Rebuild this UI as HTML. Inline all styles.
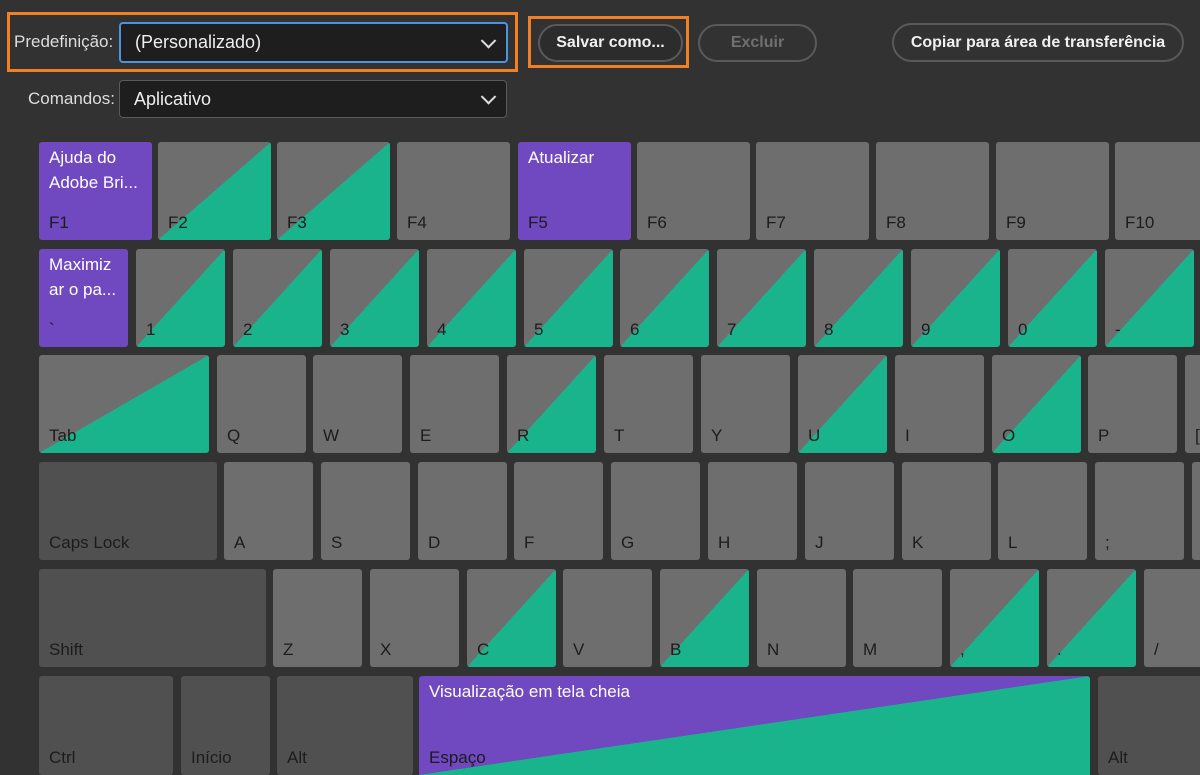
<!DOCTYPE html>
<html><head><meta charset="utf-8"><style>
html,body{margin:0;padding:0}
body{width:1200px;height:775px;background:#323232;position:relative;overflow:hidden;font-family:"Liberation Sans Narrow","Liberation Sans",sans-serif;}
.k{position:absolute;background:#6e6e6e;border-radius:3px;overflow:hidden}
.d{background:#505050}
.p{background:#7048c0}
.g{background:linear-gradient(to bottom right,#6e6e6e 50%,#1ab48c 50%)}
.sp{background:linear-gradient(to bottom right,#7048c0 50%,#1ab48c 50%)}
.k b{position:absolute;left:10px;bottom:7px;font-weight:normal;font-size:17px;color:#1c1c1c}
.k i{position:absolute;left:10px;top:3px;font-style:normal;font-size:17px;line-height:25px;color:#fff}
.r1{top:142px;height:98px}.r2{top:249px;height:98px}.r3{top:355px;height:98px}.r4{top:462px;height:98px}.r5{top:569px;height:98px}.r6{top:676px;height:99px}
.lbl{position:absolute;font-size:17px;color:#ddd}
.sel{position:absolute;background:#1e1e1e;border:1px solid #5a5a5a;border-radius:4px;box-sizing:border-box;color:#eee;font-size:18px;padding-left:14px}
.chev{position:absolute;right:12px;top:50%;width:9px;height:9px;border-right:2.5px solid #ddd;border-bottom:2.5px solid #ddd;transform:translateY(-70%) rotate(45deg)}
.btn{position:absolute;border:2px solid #5a5a5a;border-radius:20px;box-sizing:border-box;text-align:center;font-family:"Liberation Sans",sans-serif;font-weight:bold;font-size:16px;color:#f0f0f0;background:#2c2c2c}
.or{position:absolute;border:3px solid #f08024;box-sizing:border-box}
</style></head><body>
<div class="or" style="left:7px;top:12px;width:511px;height:60px"></div>
<div class="or" style="left:528px;top:16px;width:161px;height:52px"></div>
<div class="lbl" style="left:14px;top:32px">Predefinição:</div>
<div class="sel" style="left:119px;top:22px;width:389px;height:41px;border:2px solid #4b95e0;line-height:37px">(Personalizado)<span class="chev"></span></div>
<div class="btn" style="left:538px;top:24px;width:145px;height:38px;line-height:34px">Salvar como...</div>
<div class="btn" style="left:698px;top:24px;width:119px;height:38px;line-height:34px;color:#707070;background:#323232">Excluir</div>
<div class="btn" style="left:892px;top:23px;width:292px;height:39px;line-height:35px;background:#323232">Copiar para área de transferência</div>
<div class="lbl" style="left:28px;top:89px">Comandos:</div>
<div class="sel" style="left:119px;top:80px;width:388px;height:38px;line-height:36px">Aplicativo<span class="chev"></span></div>

<div class="k p r1" style="left:39px;width:113px"><i>Ajuda do<br>Adobe Bri...</i><b>F1</b></div>
<div class="k g r1" style="left:158px;width:113px"><b>F2</b></div>
<div class="k g r1" style="left:277px;width:113px"><b>F3</b></div>
<div class="k r1" style="left:397px;width:113px"><b>F4</b></div>
<div class="k p r1" style="left:518px;width:113px"><i>Atualizar</i><b>F5</b></div>
<div class="k r1" style="left:637px;width:113px"><b>F6</b></div>
<div class="k r1" style="left:756px;width:113px"><b>F7</b></div>
<div class="k r1" style="left:876px;width:113px"><b>F8</b></div>
<div class="k r1" style="left:996px;width:113px"><b>F9</b></div>
<div class="k r1" style="left:1115px;width:113px"><b>F10</b></div>

<div class="k p r2" style="left:39px;width:89px"><i>Maximiz<br>ar o pa...</i><b>`</b></div>
<div class="k g r2" style="left:136px;width:89px"><b>1</b></div>
<div class="k g r2" style="left:233px;width:89px"><b>2</b></div>
<div class="k g r2" style="left:330px;width:89px"><b>3</b></div>
<div class="k g r2" style="left:427px;width:89px"><b>4</b></div>
<div class="k g r2" style="left:524px;width:89px"><b>5</b></div>
<div class="k g r2" style="left:620px;width:89px"><b>6</b></div>
<div class="k g r2" style="left:717px;width:89px"><b>7</b></div>
<div class="k g r2" style="left:814px;width:89px"><b>8</b></div>
<div class="k g r2" style="left:911px;width:89px"><b>9</b></div>
<div class="k g r2" style="left:1008px;width:89px"><b>0</b></div>
<div class="k g r2" style="left:1105px;width:89px"><b>-</b></div>

<div class="k g r3" style="left:39px;width:170px"><b>Tab</b></div>
<div class="k r3" style="left:217px;width:89px"><b>Q</b></div>
<div class="k r3" style="left:313px;width:89px"><b>W</b></div>
<div class="k r3" style="left:410px;width:89px"><b>E</b></div>
<div class="k g r3" style="left:507px;width:89px"><b>R</b></div>
<div class="k r3" style="left:604px;width:89px"><b>T</b></div>
<div class="k r3" style="left:701px;width:89px"><b>Y</b></div>
<div class="k g r3" style="left:798px;width:89px"><b>U</b></div>
<div class="k r3" style="left:895px;width:89px"><b>I</b></div>
<div class="k g r3" style="left:992px;width:89px"><b>O</b></div>
<div class="k r3" style="left:1088px;width:89px"><b>P</b></div>
<div class="k r3" style="left:1185px;width:89px"><b>[</b></div>

<div class="k d r4" style="left:39px;width:178px"><b>Caps Lock</b></div>
<div class="k r4" style="left:224px;width:89px"><b>A</b></div>
<div class="k r4" style="left:321px;width:89px"><b>S</b></div>
<div class="k r4" style="left:418px;width:89px"><b>D</b></div>
<div class="k r4" style="left:514px;width:89px"><b>F</b></div>
<div class="k r4" style="left:611px;width:89px"><b>G</b></div>
<div class="k r4" style="left:708px;width:89px"><b>H</b></div>
<div class="k r4" style="left:805px;width:89px"><b>J</b></div>
<div class="k r4" style="left:902px;width:89px"><b>K</b></div>
<div class="k r4" style="left:998px;width:89px"><b>L</b></div>
<div class="k r4" style="left:1095px;width:89px"><b>;</b></div>
<div class="k r4" style="left:1192px;width:89px"><b>'</b></div>

<div class="k d r5" style="left:39px;width:227px"><b>Shift</b></div>
<div class="k r5" style="left:273px;width:89px"><b>Z</b></div>
<div class="k r5" style="left:370px;width:89px"><b>X</b></div>
<div class="k g r5" style="left:467px;width:89px"><b>C</b></div>
<div class="k r5" style="left:563px;width:89px"><b>V</b></div>
<div class="k g r5" style="left:660px;width:89px"><b>B</b></div>
<div class="k r5" style="left:757px;width:89px"><b>N</b></div>
<div class="k r5" style="left:853px;width:89px"><b>M</b></div>
<div class="k g r5" style="left:950px;width:89px"><b>,</b></div>
<div class="k g r5" style="left:1047px;width:89px"><b>.</b></div>
<div class="k r5" style="left:1144px;width:89px"><b>/</b></div>

<div class="k d r6" style="left:39px;width:134px"><b>Ctrl</b></div>
<div class="k d r6" style="left:181px;width:89px"><b>Início</b></div>
<div class="k d r6" style="left:277px;width:136px"><b>Alt</b></div>
<div class="k sp r6" style="left:419px;width:671px;border-radius:3px 3px 0 0"><i>Visualização em tela cheia</i><b>Espaço</b></div>
<div class="k d r6" style="left:1098px;width:136px"><b>Alt</b></div>
</body></html>
